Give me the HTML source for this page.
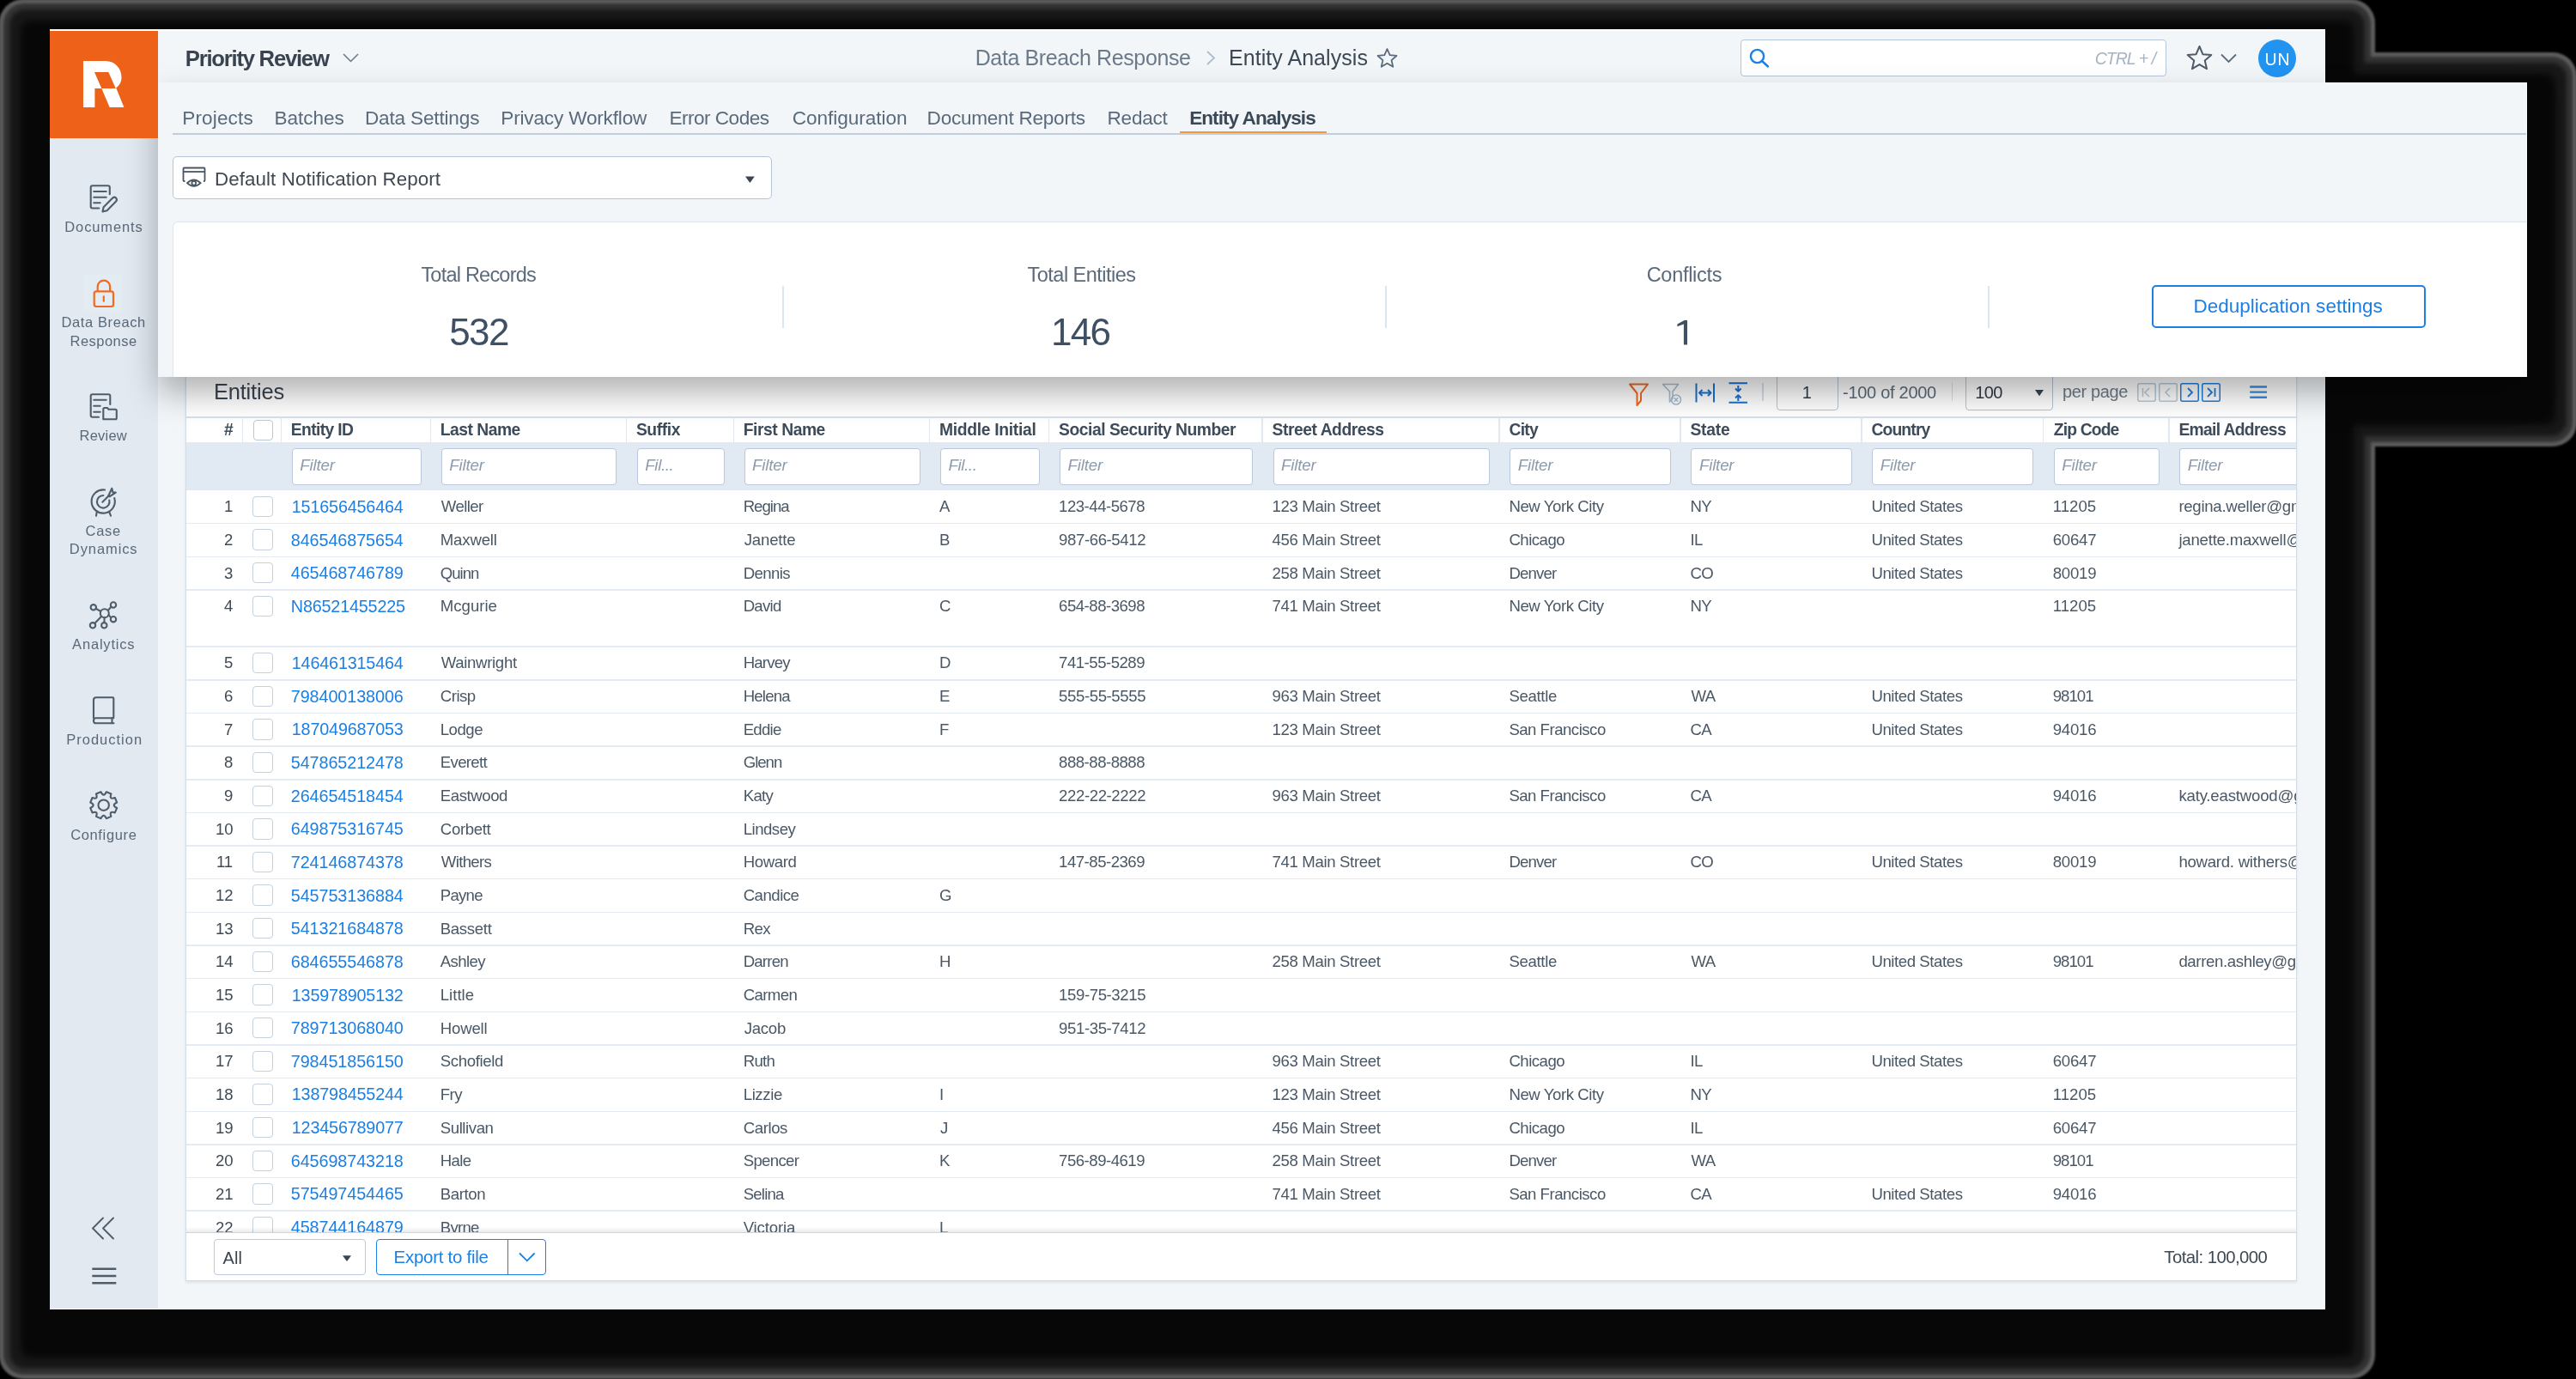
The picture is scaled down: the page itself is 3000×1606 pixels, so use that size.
<!DOCTYPE html>
<html><head><meta charset="utf-8"><style>
html,body{margin:0;padding:0;}
body{width:3000px;height:1606px;position:relative;overflow:hidden;background:#000;font-family:'Liberation Sans', sans-serif;}
</style></head><body>
<div style="position:absolute;left:0;top:0;width:3000px;height:1606px;filter:blur(0.55px);">
<div style="position:absolute;left:-1.00px;top:-1.00px;width:2767.00px;height:1607.00px;background:#5c5c5c;border-radius:28px;filter:blur(0.8px);"></div>
<div style="position:absolute;left:125.00px;top:61.00px;width:2876.00px;height:459.00px;background:#5c5c5c;border-radius:28px;filter:blur(0.8px);"></div>
<div style="position:absolute;left:4.00px;top:4.00px;width:2757.00px;height:1597.00px;background:#343434;border-radius:24px;filter:blur(1.5px);"></div>
<div style="position:absolute;left:130.00px;top:66.00px;width:2866.00px;height:449.00px;background:#343434;border-radius:24px;filter:blur(1.5px);"></div>
<div style="position:absolute;left:11.00px;top:11.00px;width:2743.00px;height:1583.00px;background:#181818;border-radius:18px;filter:blur(2.5px);"></div>
<div style="position:absolute;left:137.00px;top:73.00px;width:2852.00px;height:435.00px;background:#181818;border-radius:18px;filter:blur(2.5px);"></div>
<div style="position:absolute;left:24.00px;top:24.00px;width:2717.00px;height:1557.00px;background:#070707;border-radius:10px;filter:blur(4px);"></div>
<div style="position:absolute;left:150.00px;top:86.00px;width:2826.00px;height:409.00px;background:#070707;border-radius:10px;filter:blur(4px);"></div>
<div style="position:absolute;left:58.00px;top:34.00px;width:2650.00px;height:1491.00px;background:#f2f6f9;"></div>
<div style="position:absolute;left:58.00px;top:34.00px;width:126.00px;height:1491.00px;background:#e2e9f1;"></div>
<svg style="position:absolute;left:98.00px;top:208.00px;" width="46" height="46" viewBox="0 0 46 46"><g fill="none" stroke="#4f5d6b" stroke-width="2.1" stroke-linecap="round" stroke-linejoin="round"><path d="M17.3,34.5 H9.7 Q7.7,34.5 7.7,32.5 V10.3 Q7.7,8.3 9.7,8.3 H27.8 Q29.8,8.3 29.8,10.3 V18.3"/><path d="M11.3,15 H25.7 M11.3,21.7 H25.7 M11.3,28.3 H18.7"/><path d="M21.5,38.5 L22.6,33.2 L33.2,22.6 Q35.3,20.8 37.1,22.6 Q38.9,24.5 37.1,26.5 L26.6,37.2 Z"/></g></svg>
<div style="position:absolute;left:75.30px;top:264.38px;font-size:16.5px;line-height:0;white-space:nowrap;color:#59697a;letter-spacing:0.887px;">Documents</div>
<div style="position:absolute;left:98.00px;top:320.30px;width:43.20px;height:42.50px;background:#e3ecf3;"></div>
<svg style="position:absolute;left:98.00px;top:318.00px;" width="46" height="46" viewBox="0 0 46 46"><g fill="none" stroke="#f26a1f" stroke-width="2.2" stroke-linecap="round" stroke-linejoin="round"><path d="M15.7,20.5 V15.9 A7.2,7.2 0 0 1 30.1,15.9 V20.5"/><rect x="11.7" y="21.3" width="22.3" height="17.7" rx="2.5"/><path d="M22.8,27.3 V32.7"/></g></svg>
<div style="position:absolute;left:71.50px;top:375.38px;font-size:16.5px;line-height:0;white-space:nowrap;color:#59697a;letter-spacing:0.600px;">Data Breach</div>
<div style="position:absolute;left:81.60px;top:396.98px;font-size:16.5px;line-height:0;white-space:nowrap;color:#59697a;letter-spacing:0.457px;">Response</div>
<svg style="position:absolute;left:98.00px;top:451.00px;" width="46" height="46" viewBox="0 0 46 46"><g fill="none" stroke="#4f5d6b" stroke-width="2.1" stroke-linecap="round" stroke-linejoin="round"><path d="M17,34.8 H9.7 Q7.7,34.8 7.7,32.8 V10.2 Q7.7,8.2 9.7,8.2 H28.3 Q30.3,8.2 30.3,10.2 V20"/><path d="M11.3,14.8 H25.7 M11.3,21.8 H18.7 M11.3,28.7 H18.7"/><path d="M22.3,37.3 V25.5 Q22.3,24 23.8,24 H27 L28.5,25.8 H36.3 Q37.8,25.8 37.8,27.3 V35.8 Q37.8,37.3 36.3,37.3 H23.8 Q22.3,37.3 22.3,35.8 Z"/></g></svg>
<div style="position:absolute;left:92.50px;top:506.98px;font-size:16.5px;line-height:0;white-space:nowrap;color:#59697a;letter-spacing:0.220px;">Review</div>
<svg style="position:absolute;left:98.00px;top:562.00px;" width="46" height="46" viewBox="0 0 46 46"><g fill="none" stroke="#4f5d6b" stroke-width="2.1" stroke-linecap="round" stroke-linejoin="round"><path d="M24,8.5 A13.6,13.6 0 1 0 35.2,18"/><path d="M22.3,15 A7.3,7.3 0 1 0 29.3,20.5"/><path d="M21.3,22.7 L29,15"/><path d="M28,16 L32.3,6.8 L33.5,11.6 L36.8,11.5 L29.5,16.3 Z"/><path d="M14.7,34.3 L14,38.7 M29.3,34.3 L31,38.7"/></g></svg>
<div style="position:absolute;left:99.50px;top:617.68px;font-size:16.5px;line-height:0;white-space:nowrap;color:#59697a;letter-spacing:0.733px;">Case</div>
<div style="position:absolute;left:80.80px;top:638.88px;font-size:16.5px;line-height:0;white-space:nowrap;color:#59697a;letter-spacing:0.914px;">Dynamics</div>
<svg style="position:absolute;left:97.00px;top:693.00px;" width="46" height="46" viewBox="0 0 46 46"><g fill="none" stroke="#4f5d6b" stroke-width="2.1" stroke-linecap="round"><circle cx="24.8" cy="21.2" r="5"/><circle cx="11.8" cy="14.3" r="3.2"/><circle cx="35" cy="11.5" r="3.2"/><circle cx="35" cy="28.2" r="3.2"/><circle cx="11" cy="35.3" r="3.2"/><circle cx="24.3" cy="35.3" r="3.2"/><path d="M14.8,15.8 L20.3,19 M28.7,18 L32.4,13.8 M29.6,23.2 L32,26.2 M21.2,24.8 L13.3,33 M24.6,26.2 L24.4,32.1"/></g></svg>
<div style="position:absolute;left:84.10px;top:749.88px;font-size:16.5px;line-height:0;white-space:nowrap;color:#59697a;letter-spacing:0.812px;">Analytics</div>
<svg style="position:absolute;left:97.00px;top:804.00px;" width="46" height="46" viewBox="0 0 46 46"><g fill="none" stroke="#4f5d6b" stroke-width="2.1" stroke-linecap="round" stroke-linejoin="round"><path d="M12,32.2 V11.2 Q12,8.2 15,8.2 H34.3 Q35.3,8.2 35.3,9.2 V32.2 H14.5 Q12,32.2 12,35.2 Q12,38.3 14.5,38.3 H35.5"/><path d="M33.5,32.2 V38.3"/></g></svg>
<div style="position:absolute;left:77.30px;top:860.88px;font-size:16.5px;line-height:0;white-space:nowrap;color:#59697a;letter-spacing:0.989px;">Production</div>
<svg style="position:absolute;left:97.00px;top:915.00px;" width="46" height="46" viewBox="0 0 46 46"><g fill="none" stroke="#4f5d6b" stroke-width="2.1" stroke-linejoin="round"><path d="M26.85,7.22 L32.42,9.52 Q29.78,16.62 36.88,13.98 L39.18,19.55 Q32.30,22.70 39.18,25.85 L36.88,31.42 Q29.78,28.78 32.42,35.88 L26.85,38.18 Q23.70,31.30 20.55,38.18 L14.98,35.88 Q17.62,28.78 10.52,31.42 L8.22,25.85 Q15.10,22.70 8.22,19.55 L10.52,13.98 Q17.62,16.62 14.98,9.52 L20.55,7.22 Q23.70,14.10 26.85,7.22 Z"/><circle cx="23.7" cy="22.7" r="6.2"/></g></svg>
<div style="position:absolute;left:82.20px;top:971.78px;font-size:16.5px;line-height:0;white-space:nowrap;color:#59697a;letter-spacing:0.637px;">Configure</div>
<svg style="position:absolute;left:100.00px;top:1410.00px;" width="40" height="40" viewBox="0 0 40 40"><g fill="none" stroke="#4f5d6b" stroke-width="1.9" stroke-linecap="round" stroke-linejoin="round"><path d="M20,8.5 L8,20.5 L20,32.5 M32,8.5 L20,20.5 L32,32.5"/></g></svg>
<svg style="position:absolute;left:100.00px;top:1470.00px;" width="40" height="32" viewBox="0 0 40 32"><g fill="none" stroke="#4f5d6b" stroke-width="2.4"><path d="M7.3,7.8 H35.3 M7.3,16 H35.3 M7.3,24.3 H35.3"/></g></svg>
<div style="position:absolute;left:184.00px;top:34.00px;width:2524.00px;height:62.00px;background:#f2f6f9;"></div>
<div style="position:absolute;left:215.80px;top:67.69px;font-size:25.7px;line-height:0;white-space:nowrap;color:#3a4450;font-weight:700;letter-spacing:-1.250px;">Priority Review</div>
<svg style="position:absolute;left:395.00px;top:55.00px;" width="28" height="24" viewBox="0 0 28 24"><path d="M5,8 L13.5,16.5 L22,8" fill="none" stroke="#6a7885" stroke-width="1.5"/></svg>
<div style="position:absolute;left:1135.70px;top:66.74px;font-size:25px;line-height:0;white-space:nowrap;color:#6b7a8a;letter-spacing:-0.379px;">Data Breach Response</div>
<svg style="position:absolute;left:1400.00px;top:55.00px;" width="22" height="24" viewBox="0 0 22 24"><path d="M6,5 L14,12.5 L6,20" fill="none" stroke="#a9bdd3" stroke-width="1.8"/></svg>
<div style="position:absolute;left:1431.00px;top:66.74px;font-size:25px;line-height:0;white-space:nowrap;color:#3c4856;letter-spacing:0.050px;">Entity Analysis</div>
<svg style="position:absolute;left:1595.00px;top:48.00px;" width="40" height="40" viewBox="0 0 40 40"><path d="M20.50,9.00 L23.62,16.21 L31.44,16.95 L25.54,22.14 L27.26,29.80 L20.50,25.80 L13.74,29.80 L15.46,22.14 L9.56,16.95 L17.38,16.21 Z" fill="none" stroke="#5b6b7b" stroke-width="1.8" stroke-linejoin="round"/></svg>
<div style="position:absolute;left:2027.40px;top:46.20px;width:495.80px;height:42.50px;background:#fff;border:1.6px solid #b5c6d9;border-radius:4px;box-sizing:border-box;"></div>
<svg style="position:absolute;left:2030.00px;top:50.00px;" width="36" height="36" viewBox="0 0 36 36"><g fill="none" stroke="#1b7fe3" stroke-width="2.4" stroke-linecap="round"><circle cx="16.5" cy="15.5" r="7.6"/><path d="M22,21 L29,27.5"/></g></svg>
<div style="position:absolute;left:2439.70px;top:67.94px;font-size:19.5px;line-height:0;white-space:nowrap;color:#a5b3c2;font-style:italic;letter-spacing:-0.971px;">CTRL + /</div>
<svg style="position:absolute;left:2540.00px;top:46.00px;" width="44" height="44" viewBox="0 0 44 44"><path d="M21.50,8.00 L25.38,17.16 L35.29,18.02 L27.78,24.54 L30.02,34.23 L21.50,29.10 L12.98,34.23 L15.22,24.54 L7.71,18.02 L17.62,17.16 Z" fill="none" stroke="#4f5b67" stroke-width="2" stroke-linejoin="round"/></svg>
<svg style="position:absolute;left:2582.00px;top:58.00px;" width="26" height="20" viewBox="0 0 26 20"><path d="M5,5.5 L13.5,14 L22,5.5" fill="none" stroke="#5b6b7b" stroke-width="1.8"/></svg>
<div style="position:absolute;left:2630.00px;top:45.50px;width:44.00px;height:44.00px;background:#2193f0;border-radius:50%;"></div>
<div style="position:absolute;left:2637.50px;top:68.74px;font-size:19.5px;line-height:0;white-space:nowrap;color:#fff;letter-spacing:1.000px;">UN</div>
<div style="position:absolute;left:216.20px;top:300.00px;width:2458.80px;height:1191.60px;background:#fff;border:1px solid #d3dde8;box-sizing:border-box;box-shadow:0 2px 3px rgba(0,0,0,0.08);"></div>
<div style="position:absolute;left:248.90px;top:456.16px;font-size:25.5px;line-height:0;white-space:nowrap;color:#3a4654;letter-spacing:-0.186px;">Entities</div>
<svg style="position:absolute;left:1890.00px;top:440.00px;" width="36" height="34" viewBox="0 0 36 34"><path d="M8,7.5 H29 L21,18 V26.5 L16.5,32 V18 Z" fill="none" stroke="#ee6a24" stroke-width="2" stroke-linejoin="round"/></svg>
<svg style="position:absolute;left:1930.00px;top:440.00px;" width="36" height="34" viewBox="0 0 36 34"><g fill="none" stroke="#a9bdd1" stroke-width="1.6" stroke-linejoin="round"><path d="M6.5,7.5 H24.5 L18,16 V24 L14.5,28 V16 Z"/><circle cx="22" cy="25.5" r="5.5"/><path d="M19.8,23.3 L24.2,27.7 M24.2,23.3 L19.8,27.7"/></g></svg>
<svg style="position:absolute;left:1970.00px;top:440.00px;" width="36" height="34" viewBox="0 0 36 34"><g fill="none" stroke="#1a73d2" stroke-width="2"><path d="M5.5,6.5 V28.5 M26,6.5 V28.5 M9,17.5 H22.5"/><path d="M12.5,14 L9,17.5 L12.5,21 M19,14 L22.5,17.5 L19,21" stroke-linejoin="round"/></g></svg>
<svg style="position:absolute;left:2008.00px;top:440.00px;" width="36" height="34" viewBox="0 0 36 34"><g fill="none" stroke="#1a73d2" stroke-width="2"><path d="M5.5,6.3 H27 M5.5,28.8 H27 M16.3,9 V15.5 M16.3,20.5 V27"/><path d="M13,12.5 L16.3,15.8 L19.6,12.5 M13,23.5 L16.3,20.2 L19.6,23.5" stroke-linejoin="round"/></g></svg>
<div style="position:absolute;left:2052.00px;top:446.00px;width:1.50px;height:21.00px;background:#d6dfe8;"></div>
<div style="position:absolute;left:2068.70px;top:420.00px;width:72.60px;height:58.30px;border:1.5px solid #b3c4d6;border-radius:4px;box-sizing:border-box;background:rgba(255,255,255,0.0);"></div>
<div style="position:absolute;left:2098.70px;top:457.27px;font-size:20px;line-height:0;white-space:nowrap;color:#333c46;">1</div>
<div style="position:absolute;left:2146.00px;top:457.27px;font-size:20px;line-height:0;white-space:nowrap;color:#5d6c7b;letter-spacing:-0.282px;">-100 of 2000</div>
<div style="position:absolute;left:2272.60px;top:446.00px;width:1.40px;height:21.00px;background:#d6dfe8;"></div>
<div style="position:absolute;left:2289.40px;top:420.00px;width:101.60px;height:58.30px;border:1.5px solid #b3c4d6;border-radius:4px;box-sizing:border-box;"></div>
<div style="position:absolute;left:2300.30px;top:457.07px;font-size:20px;line-height:0;white-space:nowrap;color:#333c46;letter-spacing:-0.600px;">100</div>
<svg style="position:absolute;left:2366.00px;top:450.00px;" width="18" height="16" viewBox="0 0 18 16"><path d="M4,4 H14 L9,11.3 Z" fill="#3a4552"/></svg>
<div style="position:absolute;left:2402.00px;top:456.37px;font-size:20px;line-height:0;white-space:nowrap;color:#6d7b89;letter-spacing:-0.386px;">per page</div>
<svg style="position:absolute;left:2488.20px;top:445.00px;" width="24" height="24" viewBox="0 0 24 24"><rect x="1.75" y="1.75" width="20.5" height="20.5" rx="2" fill="none" stroke="#b9c9da" stroke-width="1.5"/><path d="M7.5,7 V17 M15,7 L10,12 L15,17" fill="none" stroke="#b9c9da" stroke-width="1.5"/></svg>
<svg style="position:absolute;left:2513.00px;top:445.00px;" width="24" height="24" viewBox="0 0 24 24"><rect x="1.75" y="1.75" width="20.5" height="20.5" rx="2" fill="none" stroke="#b9c9da" stroke-width="1.5"/><path d="M14,7 L9,12 L14,17" fill="none" stroke="#b9c9da" stroke-width="1.5"/></svg>
<svg style="position:absolute;left:2538.00px;top:445.00px;" width="24" height="24" viewBox="0 0 24 24"><rect x="1.75" y="1.75" width="20.5" height="20.5" rx="2" fill="none" stroke="#1b7fe3" stroke-width="1.5"/><path d="M10,7 L15,12 L10,17" fill="none" stroke="#1b7fe3" stroke-width="1.8"/></svg>
<svg style="position:absolute;left:2562.90px;top:445.00px;" width="24" height="24" viewBox="0 0 24 24"><rect x="1.75" y="1.75" width="20.5" height="20.5" rx="2" fill="none" stroke="#1b7fe3" stroke-width="1.5"/><path d="M8,7 L13,12 L8,17 M16.5,7 V17" fill="none" stroke="#1b7fe3" stroke-width="1.8"/></svg>
<svg style="position:absolute;left:2616.00px;top:446.00px;" width="28" height="22" viewBox="0 0 28 22"><path d="M4.2,4.5 H24 M4.2,10.6 H24 M4.2,16.7 H24" fill="none" stroke="#3a8ee6" stroke-width="2.4"/></svg>
<div style="position:absolute;left:217.20px;top:484.50px;width:2456.80px;height:2.00px;background:#d7e1eb;"></div>
<div style="position:absolute;left:281.55px;top:486.00px;width:1.50px;height:28.60px;background:#e1e8f0;"></div>
<div style="position:absolute;left:326.65px;top:486.00px;width:1.50px;height:28.60px;background:#e1e8f0;"></div>
<div style="position:absolute;left:500.65px;top:486.00px;width:1.50px;height:28.60px;background:#e1e8f0;"></div>
<div style="position:absolute;left:728.75px;top:486.00px;width:1.50px;height:28.60px;background:#e1e8f0;"></div>
<div style="position:absolute;left:853.55px;top:486.00px;width:1.50px;height:28.60px;background:#e1e8f0;"></div>
<div style="position:absolute;left:1081.85px;top:486.00px;width:1.50px;height:28.60px;background:#e1e8f0;"></div>
<div style="position:absolute;left:1220.95px;top:486.00px;width:1.50px;height:28.60px;background:#e1e8f0;"></div>
<div style="position:absolute;left:1469.45px;top:486.00px;width:1.50px;height:28.60px;background:#e1e8f0;"></div>
<div style="position:absolute;left:1745.25px;top:486.00px;width:1.50px;height:28.60px;background:#e1e8f0;"></div>
<div style="position:absolute;left:1956.35px;top:486.00px;width:1.50px;height:28.60px;background:#e1e8f0;"></div>
<div style="position:absolute;left:2167.25px;top:486.00px;width:1.50px;height:28.60px;background:#e1e8f0;"></div>
<div style="position:absolute;left:2378.65px;top:486.00px;width:1.50px;height:28.60px;background:#e1e8f0;"></div>
<div style="position:absolute;left:2525.25px;top:486.00px;width:1.50px;height:28.60px;background:#e1e8f0;"></div>
<div style="position:absolute;left:217.20px;top:514.60px;width:2456.80px;height:56.40px;background:#e1e9f2;"></div>
<div style="position:absolute;left:261.00px;top:501.01px;font-size:19.3px;line-height:0;white-space:nowrap;color:#3d4b5a;font-weight:700;">#</div>
<div style="position:absolute;left:294.50px;top:488.80px;width:23.90px;height:24.10px;border:1.5px solid #b9c8d8;border-radius:4px;box-sizing:border-box;background:#fff;"></div>
<div style="position:absolute;left:338.80px;top:501.01px;font-size:19.3px;line-height:0;white-space:nowrap;color:#3d4b5a;font-weight:700;letter-spacing:-0.625px;">Entity ID</div>
<div style="position:absolute;left:339.70px;top:522.00px;width:151.20px;height:43.00px;background:#fff;border:1.5px solid #b9c9db;border-radius:4px;box-sizing:border-box;"></div>
<div style="position:absolute;left:349.20px;top:542.49px;font-size:18.8px;line-height:0;white-space:nowrap;color:#8d9bab;font-style:italic;letter-spacing:-0.200px;">Filter</div>
<div style="position:absolute;left:512.80px;top:501.01px;font-size:19.3px;line-height:0;white-space:nowrap;color:#3d4b5a;font-weight:700;letter-spacing:-0.500px;">Last Name</div>
<div style="position:absolute;left:513.70px;top:522.00px;width:204.70px;height:43.00px;background:#fff;border:1.5px solid #b9c9db;border-radius:4px;box-sizing:border-box;"></div>
<div style="position:absolute;left:523.20px;top:542.49px;font-size:18.8px;line-height:0;white-space:nowrap;color:#8d9bab;font-style:italic;letter-spacing:-0.200px;">Filter</div>
<div style="position:absolute;left:740.90px;top:501.01px;font-size:19.3px;line-height:0;white-space:nowrap;color:#3d4b5a;font-weight:700;letter-spacing:-0.400px;">Suffix</div>
<div style="position:absolute;left:741.80px;top:522.00px;width:102.00px;height:43.00px;background:#fff;border:1.5px solid #b9c9db;border-radius:4px;box-sizing:border-box;"></div>
<div style="position:absolute;left:751.30px;top:542.49px;font-size:18.8px;line-height:0;white-space:nowrap;color:#8d9bab;font-style:italic;letter-spacing:-0.400px;">Fil...</div>
<div style="position:absolute;left:865.70px;top:501.01px;font-size:19.3px;line-height:0;white-space:nowrap;color:#3d4b5a;font-weight:700;letter-spacing:-0.444px;">First Name</div>
<div style="position:absolute;left:866.60px;top:522.00px;width:205.10px;height:43.00px;background:#fff;border:1.5px solid #b9c9db;border-radius:4px;box-sizing:border-box;"></div>
<div style="position:absolute;left:876.10px;top:542.49px;font-size:18.8px;line-height:0;white-space:nowrap;color:#8d9bab;font-style:italic;letter-spacing:-0.200px;">Filter</div>
<div style="position:absolute;left:1094.00px;top:501.01px;font-size:19.3px;line-height:0;white-space:nowrap;color:#3d4b5a;font-weight:700;letter-spacing:-0.308px;">Middle Initial</div>
<div style="position:absolute;left:1094.90px;top:522.00px;width:116.00px;height:43.00px;background:#fff;border:1.5px solid #b9c9db;border-radius:4px;box-sizing:border-box;"></div>
<div style="position:absolute;left:1104.40px;top:542.49px;font-size:18.8px;line-height:0;white-space:nowrap;color:#8d9bab;font-style:italic;letter-spacing:-0.400px;">Fil...</div>
<div style="position:absolute;left:1233.10px;top:501.01px;font-size:19.3px;line-height:0;white-space:nowrap;color:#3d4b5a;font-weight:700;letter-spacing:-0.476px;">Social Security Number</div>
<div style="position:absolute;left:1234.00px;top:522.00px;width:225.30px;height:43.00px;background:#fff;border:1.5px solid #b9c9db;border-radius:4px;box-sizing:border-box;"></div>
<div style="position:absolute;left:1243.50px;top:542.49px;font-size:18.8px;line-height:0;white-space:nowrap;color:#8d9bab;font-style:italic;letter-spacing:-0.200px;">Filter</div>
<div style="position:absolute;left:1481.60px;top:501.01px;font-size:19.3px;line-height:0;white-space:nowrap;color:#3d4b5a;font-weight:700;letter-spacing:-0.462px;">Street Address</div>
<div style="position:absolute;left:1482.50px;top:522.00px;width:252.60px;height:43.00px;background:#fff;border:1.5px solid #b9c9db;border-radius:4px;box-sizing:border-box;"></div>
<div style="position:absolute;left:1492.00px;top:542.49px;font-size:18.8px;line-height:0;white-space:nowrap;color:#8d9bab;font-style:italic;letter-spacing:-0.200px;">Filter</div>
<div style="position:absolute;left:1757.40px;top:501.01px;font-size:19.3px;line-height:0;white-space:nowrap;color:#3d4b5a;font-weight:700;letter-spacing:-0.667px;">City</div>
<div style="position:absolute;left:1758.30px;top:522.00px;width:188.00px;height:43.00px;background:#fff;border:1.5px solid #b9c9db;border-radius:4px;box-sizing:border-box;"></div>
<div style="position:absolute;left:1767.80px;top:542.49px;font-size:18.8px;line-height:0;white-space:nowrap;color:#8d9bab;font-style:italic;letter-spacing:-0.200px;">Filter</div>
<div style="position:absolute;left:1968.50px;top:501.01px;font-size:19.3px;line-height:0;white-space:nowrap;color:#3d4b5a;font-weight:700;letter-spacing:-0.250px;">State</div>
<div style="position:absolute;left:1969.40px;top:522.00px;width:188.10px;height:43.00px;background:#fff;border:1.5px solid #b9c9db;border-radius:4px;box-sizing:border-box;"></div>
<div style="position:absolute;left:1978.90px;top:542.49px;font-size:18.8px;line-height:0;white-space:nowrap;color:#8d9bab;font-style:italic;letter-spacing:-0.200px;">Filter</div>
<div style="position:absolute;left:2179.40px;top:501.01px;font-size:19.3px;line-height:0;white-space:nowrap;color:#3d4b5a;font-weight:700;letter-spacing:-0.833px;">Country</div>
<div style="position:absolute;left:2180.30px;top:522.00px;width:188.20px;height:43.00px;background:#fff;border:1.5px solid #b9c9db;border-radius:4px;box-sizing:border-box;"></div>
<div style="position:absolute;left:2189.80px;top:542.49px;font-size:18.8px;line-height:0;white-space:nowrap;color:#8d9bab;font-style:italic;letter-spacing:-0.200px;">Filter</div>
<div style="position:absolute;left:2391.80px;top:501.01px;font-size:19.3px;line-height:0;white-space:nowrap;color:#3d4b5a;font-weight:700;letter-spacing:-0.857px;">Zip Code</div>
<div style="position:absolute;left:2391.70px;top:522.00px;width:123.70px;height:43.00px;background:#fff;border:1.5px solid #b9c9db;border-radius:4px;box-sizing:border-box;"></div>
<div style="position:absolute;left:2401.20px;top:542.49px;font-size:18.8px;line-height:0;white-space:nowrap;color:#8d9bab;font-style:italic;letter-spacing:-0.200px;">Filter</div>
<div style="position:absolute;left:2537.40px;top:501.01px;font-size:19.3px;line-height:0;white-space:nowrap;color:#3d4b5a;font-weight:700;letter-spacing:-0.667px;">Email Address</div>
<div style="position:absolute;left:2538.30px;top:522.00px;width:135.70px;height:43.00px;background:#fff;border:1.5px solid #b9c9db;border-radius:4px;box-sizing:border-box;border-right:none;border-radius:4px 0 0 4px;"></div>
<div style="position:absolute;left:2547.80px;top:542.49px;font-size:18.8px;line-height:0;white-space:nowrap;color:#8d9bab;font-style:italic;letter-spacing:-0.200px;">Filter</div>
<div style="position:absolute;left:217.20px;top:571.00px;width:2456.80px;height:864.50px;overflow:hidden;">
<div style="position:absolute;left:0.00px;top:37.95px;width:2456.80px;height:1.50px;background:#e5ebf2;"></div>
<div style="position:absolute;left:43.70px;top:19.36px;font-size:18.6px;line-height:0;white-space:nowrap;color:#3f4a55;">1</div>
<div style="position:absolute;left:77.00px;top:6.80px;width:24.10px;height:24.40px;border:1.5px solid #c3d0de;border-radius:4px;box-sizing:border-box;background:#fff;"></div>
<div style="position:absolute;left:122.60px;top:18.94px;font-size:19.8px;line-height:0;white-space:nowrap;color:#1b7fe3;letter-spacing:-0.182px;">151656456464</div>
<div style="position:absolute;left:296.60px;top:19.36px;font-size:18.6px;line-height:0;white-space:nowrap;color:#4a5866;letter-spacing:-0.600px;">Weller</div>
<div style="position:absolute;left:648.50px;top:19.36px;font-size:18.6px;line-height:0;white-space:nowrap;color:#4a5866;letter-spacing:-1.000px;">Regina</div>
<div style="position:absolute;left:876.80px;top:19.36px;font-size:18.6px;line-height:0;white-space:nowrap;color:#4a5866;">A</div>
<div style="position:absolute;left:1015.90px;top:19.36px;font-size:18.6px;line-height:0;white-space:nowrap;color:#4a5866;letter-spacing:-0.500px;">123-44-5678</div>
<div style="position:absolute;left:1264.40px;top:19.36px;font-size:18.6px;line-height:0;white-space:nowrap;color:#4a5866;letter-spacing:-0.357px;">123 Main Street</div>
<div style="position:absolute;left:1540.20px;top:19.36px;font-size:18.6px;line-height:0;white-space:nowrap;color:#4a5866;letter-spacing:-0.417px;">New York City</div>
<div style="position:absolute;left:1751.30px;top:19.36px;font-size:18.6px;line-height:0;white-space:nowrap;color:#4a5866;letter-spacing:-0.558px;">NY</div>
<div style="position:absolute;left:1962.20px;top:19.36px;font-size:18.6px;line-height:0;white-space:nowrap;color:#4a5866;letter-spacing:-0.417px;">United States</div>
<div style="position:absolute;left:2173.60px;top:19.36px;font-size:18.6px;line-height:0;white-space:nowrap;color:#4a5866;">11205</div>
<div style="position:absolute;left:2320.20px;top:19.36px;font-size:18.6px;line-height:0;white-space:nowrap;color:#4a5866;letter-spacing:-0.273px;">regina.weller@gmail.com</div>
<div style="position:absolute;left:0.00px;top:76.60px;width:2456.80px;height:1.50px;background:#e5ebf2;"></div>
<div style="position:absolute;left:43.70px;top:58.01px;font-size:18.6px;line-height:0;white-space:nowrap;color:#3f4a55;">2</div>
<div style="position:absolute;left:77.00px;top:45.45px;width:24.10px;height:24.40px;border:1.5px solid #c3d0de;border-radius:4px;box-sizing:border-box;background:#fff;"></div>
<div style="position:absolute;left:121.60px;top:57.59px;font-size:19.8px;line-height:0;white-space:nowrap;color:#1b7fe3;letter-spacing:-0.091px;">846546875654</div>
<div style="position:absolute;left:295.60px;top:58.01px;font-size:18.6px;line-height:0;white-space:nowrap;color:#4a5866;letter-spacing:-0.167px;">Maxwell</div>
<div style="position:absolute;left:649.50px;top:58.01px;font-size:18.6px;line-height:0;white-space:nowrap;color:#4a5866;letter-spacing:-0.167px;">Janette</div>
<div style="position:absolute;left:876.80px;top:58.01px;font-size:18.6px;line-height:0;white-space:nowrap;color:#4a5866;">B</div>
<div style="position:absolute;left:1015.90px;top:58.01px;font-size:18.6px;line-height:0;white-space:nowrap;color:#4a5866;letter-spacing:-0.400px;">987-66-5412</div>
<div style="position:absolute;left:1264.40px;top:58.01px;font-size:18.6px;line-height:0;white-space:nowrap;color:#4a5866;letter-spacing:-0.357px;">456 Main Street</div>
<div style="position:absolute;left:1540.20px;top:58.01px;font-size:18.6px;line-height:0;white-space:nowrap;color:#4a5866;letter-spacing:-0.500px;">Chicago</div>
<div style="position:absolute;left:1751.30px;top:58.01px;font-size:18.6px;line-height:0;white-space:nowrap;color:#4a5866;letter-spacing:-0.558px;">IL</div>
<div style="position:absolute;left:1962.20px;top:58.01px;font-size:18.6px;line-height:0;white-space:nowrap;color:#4a5866;letter-spacing:-0.417px;">United States</div>
<div style="position:absolute;left:2173.60px;top:58.01px;font-size:18.6px;line-height:0;white-space:nowrap;color:#4a5866;letter-spacing:-0.250px;">60647</div>
<div style="position:absolute;left:2320.20px;top:58.01px;font-size:18.6px;line-height:0;white-space:nowrap;color:#4a5866;letter-spacing:-0.208px;">janette.maxwell@gmail.com</div>
<div style="position:absolute;left:0.00px;top:115.25px;width:2456.80px;height:1.50px;background:#e5ebf2;"></div>
<div style="position:absolute;left:43.70px;top:96.66px;font-size:18.6px;line-height:0;white-space:nowrap;color:#3f4a55;">3</div>
<div style="position:absolute;left:77.00px;top:84.10px;width:24.10px;height:24.40px;border:1.5px solid #c3d0de;border-radius:4px;box-sizing:border-box;background:#fff;"></div>
<div style="position:absolute;left:121.60px;top:96.24px;font-size:19.8px;line-height:0;white-space:nowrap;color:#1b7fe3;letter-spacing:-0.091px;">465468746789</div>
<div style="position:absolute;left:295.60px;top:96.66px;font-size:18.6px;line-height:0;white-space:nowrap;color:#4a5866;letter-spacing:-1.000px;">Quinn</div>
<div style="position:absolute;left:648.50px;top:96.66px;font-size:18.6px;line-height:0;white-space:nowrap;color:#4a5866;letter-spacing:-0.600px;">Dennis</div>
<div style="position:absolute;left:1264.40px;top:96.66px;font-size:18.6px;line-height:0;white-space:nowrap;color:#4a5866;letter-spacing:-0.357px;">258 Main Street</div>
<div style="position:absolute;left:1540.20px;top:96.66px;font-size:18.6px;line-height:0;white-space:nowrap;color:#4a5866;letter-spacing:-0.800px;">Denver</div>
<div style="position:absolute;left:1751.30px;top:96.66px;font-size:18.6px;line-height:0;white-space:nowrap;color:#4a5866;letter-spacing:-0.558px;">CO</div>
<div style="position:absolute;left:1962.20px;top:96.66px;font-size:18.6px;line-height:0;white-space:nowrap;color:#4a5866;letter-spacing:-0.417px;">United States</div>
<div style="position:absolute;left:2173.60px;top:96.66px;font-size:18.6px;line-height:0;white-space:nowrap;color:#4a5866;letter-spacing:-0.250px;">80019</div>
<div style="position:absolute;left:0.00px;top:181.40px;width:2456.80px;height:1.50px;background:#e5ebf2;"></div>
<div style="position:absolute;left:43.70px;top:135.31px;font-size:18.6px;line-height:0;white-space:nowrap;color:#3f4a55;">4</div>
<div style="position:absolute;left:77.00px;top:122.75px;width:24.10px;height:24.40px;border:1.5px solid #c3d0de;border-radius:4px;box-sizing:border-box;background:#fff;"></div>
<div style="position:absolute;left:121.60px;top:134.89px;font-size:19.8px;line-height:0;white-space:nowrap;color:#1b7fe3;letter-spacing:-0.182px;">N86521455225</div>
<div style="position:absolute;left:295.60px;top:135.31px;font-size:18.6px;line-height:0;white-space:nowrap;color:#4a5866;">Mcgurie</div>
<div style="position:absolute;left:648.50px;top:135.31px;font-size:18.6px;line-height:0;white-space:nowrap;color:#4a5866;letter-spacing:-0.750px;">David</div>
<div style="position:absolute;left:876.80px;top:135.31px;font-size:18.6px;line-height:0;white-space:nowrap;color:#4a5866;">C</div>
<div style="position:absolute;left:1015.90px;top:135.31px;font-size:18.6px;line-height:0;white-space:nowrap;color:#4a5866;letter-spacing:-0.500px;">654-88-3698</div>
<div style="position:absolute;left:1264.40px;top:135.31px;font-size:18.6px;line-height:0;white-space:nowrap;color:#4a5866;letter-spacing:-0.357px;">741 Main Street</div>
<div style="position:absolute;left:1540.20px;top:135.31px;font-size:18.6px;line-height:0;white-space:nowrap;color:#4a5866;letter-spacing:-0.417px;">New York City</div>
<div style="position:absolute;left:1751.30px;top:135.31px;font-size:18.6px;line-height:0;white-space:nowrap;color:#4a5866;letter-spacing:-0.558px;">NY</div>
<div style="position:absolute;left:2173.60px;top:135.31px;font-size:18.6px;line-height:0;white-space:nowrap;color:#4a5866;">11205</div>
<div style="position:absolute;left:0.00px;top:220.05px;width:2456.80px;height:1.50px;background:#e5ebf2;"></div>
<div style="position:absolute;left:43.70px;top:201.46px;font-size:18.6px;line-height:0;white-space:nowrap;color:#3f4a55;">5</div>
<div style="position:absolute;left:77.00px;top:188.90px;width:24.10px;height:24.40px;border:1.5px solid #c3d0de;border-radius:4px;box-sizing:border-box;background:#fff;"></div>
<div style="position:absolute;left:122.60px;top:201.04px;font-size:19.8px;line-height:0;white-space:nowrap;color:#1b7fe3;letter-spacing:-0.182px;">146461315464</div>
<div style="position:absolute;left:296.60px;top:201.46px;font-size:18.6px;line-height:0;white-space:nowrap;color:#4a5866;letter-spacing:-0.333px;">Wainwright</div>
<div style="position:absolute;left:648.50px;top:201.46px;font-size:18.6px;line-height:0;white-space:nowrap;color:#4a5866;letter-spacing:-0.800px;">Harvey</div>
<div style="position:absolute;left:876.80px;top:201.46px;font-size:18.6px;line-height:0;white-space:nowrap;color:#4a5866;">D</div>
<div style="position:absolute;left:1015.90px;top:201.46px;font-size:18.6px;line-height:0;white-space:nowrap;color:#4a5866;letter-spacing:-0.500px;">741-55-5289</div>
<div style="position:absolute;left:0.00px;top:258.70px;width:2456.80px;height:1.50px;background:#e5ebf2;"></div>
<div style="position:absolute;left:43.70px;top:240.11px;font-size:18.6px;line-height:0;white-space:nowrap;color:#3f4a55;">6</div>
<div style="position:absolute;left:77.00px;top:227.55px;width:24.10px;height:24.40px;border:1.5px solid #c3d0de;border-radius:4px;box-sizing:border-box;background:#fff;"></div>
<div style="position:absolute;left:121.60px;top:239.69px;font-size:19.8px;line-height:0;white-space:nowrap;color:#1b7fe3;letter-spacing:-0.091px;">798400138006</div>
<div style="position:absolute;left:295.60px;top:240.11px;font-size:18.6px;line-height:0;white-space:nowrap;color:#4a5866;letter-spacing:-0.500px;">Crisp</div>
<div style="position:absolute;left:648.50px;top:240.11px;font-size:18.6px;line-height:0;white-space:nowrap;color:#4a5866;letter-spacing:-0.800px;">Helena</div>
<div style="position:absolute;left:876.80px;top:240.11px;font-size:18.6px;line-height:0;white-space:nowrap;color:#4a5866;">E</div>
<div style="position:absolute;left:1015.90px;top:240.11px;font-size:18.6px;line-height:0;white-space:nowrap;color:#4a5866;letter-spacing:-0.400px;">555-55-5555</div>
<div style="position:absolute;left:1264.40px;top:240.11px;font-size:18.6px;line-height:0;white-space:nowrap;color:#4a5866;letter-spacing:-0.357px;">963 Main Street</div>
<div style="position:absolute;left:1540.20px;top:240.11px;font-size:18.6px;line-height:0;white-space:nowrap;color:#4a5866;letter-spacing:-0.333px;">Seattle</div>
<div style="position:absolute;left:1752.30px;top:240.11px;font-size:18.6px;line-height:0;white-space:nowrap;color:#4a5866;letter-spacing:-0.558px;">WA</div>
<div style="position:absolute;left:1962.20px;top:240.11px;font-size:18.6px;line-height:0;white-space:nowrap;color:#4a5866;letter-spacing:-0.417px;">United States</div>
<div style="position:absolute;left:2173.60px;top:240.11px;font-size:18.6px;line-height:0;white-space:nowrap;color:#4a5866;letter-spacing:-1.000px;">98101</div>
<div style="position:absolute;left:0.00px;top:297.35px;width:2456.80px;height:1.50px;background:#e5ebf2;"></div>
<div style="position:absolute;left:43.70px;top:278.76px;font-size:18.6px;line-height:0;white-space:nowrap;color:#3f4a55;">7</div>
<div style="position:absolute;left:77.00px;top:266.20px;width:24.10px;height:24.40px;border:1.5px solid #c3d0de;border-radius:4px;box-sizing:border-box;background:#fff;"></div>
<div style="position:absolute;left:122.60px;top:278.34px;font-size:19.8px;line-height:0;white-space:nowrap;color:#1b7fe3;letter-spacing:-0.182px;">187049687053</div>
<div style="position:absolute;left:295.60px;top:278.76px;font-size:18.6px;line-height:0;white-space:nowrap;color:#4a5866;letter-spacing:-0.500px;">Lodge</div>
<div style="position:absolute;left:648.50px;top:278.76px;font-size:18.6px;line-height:0;white-space:nowrap;color:#4a5866;letter-spacing:-0.750px;">Eddie</div>
<div style="position:absolute;left:876.80px;top:278.76px;font-size:18.6px;line-height:0;white-space:nowrap;color:#4a5866;">F</div>
<div style="position:absolute;left:1264.40px;top:278.76px;font-size:18.6px;line-height:0;white-space:nowrap;color:#4a5866;letter-spacing:-0.357px;">123 Main Street</div>
<div style="position:absolute;left:1540.20px;top:278.76px;font-size:18.6px;line-height:0;white-space:nowrap;color:#4a5866;letter-spacing:-0.500px;">San Francisco</div>
<div style="position:absolute;left:1751.30px;top:278.76px;font-size:18.6px;line-height:0;white-space:nowrap;color:#4a5866;letter-spacing:-0.558px;">CA</div>
<div style="position:absolute;left:1962.20px;top:278.76px;font-size:18.6px;line-height:0;white-space:nowrap;color:#4a5866;letter-spacing:-0.417px;">United States</div>
<div style="position:absolute;left:2173.60px;top:278.76px;font-size:18.6px;line-height:0;white-space:nowrap;color:#4a5866;letter-spacing:-0.250px;">94016</div>
<div style="position:absolute;left:0.00px;top:336.00px;width:2456.80px;height:1.50px;background:#e5ebf2;"></div>
<div style="position:absolute;left:43.70px;top:317.41px;font-size:18.6px;line-height:0;white-space:nowrap;color:#3f4a55;">8</div>
<div style="position:absolute;left:77.00px;top:304.85px;width:24.10px;height:24.40px;border:1.5px solid #c3d0de;border-radius:4px;box-sizing:border-box;background:#fff;"></div>
<div style="position:absolute;left:121.60px;top:316.99px;font-size:19.8px;line-height:0;white-space:nowrap;color:#1b7fe3;letter-spacing:-0.091px;">547865212478</div>
<div style="position:absolute;left:295.60px;top:317.41px;font-size:18.6px;line-height:0;white-space:nowrap;color:#4a5866;letter-spacing:-0.667px;">Everett</div>
<div style="position:absolute;left:648.50px;top:317.41px;font-size:18.6px;line-height:0;white-space:nowrap;color:#4a5866;letter-spacing:-1.000px;">Glenn</div>
<div style="position:absolute;left:1015.90px;top:317.41px;font-size:18.6px;line-height:0;white-space:nowrap;color:#4a5866;letter-spacing:-0.500px;">888-88-8888</div>
<div style="position:absolute;left:0.00px;top:374.65px;width:2456.80px;height:1.50px;background:#e5ebf2;"></div>
<div style="position:absolute;left:43.70px;top:356.06px;font-size:18.6px;line-height:0;white-space:nowrap;color:#3f4a55;">9</div>
<div style="position:absolute;left:77.00px;top:343.50px;width:24.10px;height:24.40px;border:1.5px solid #c3d0de;border-radius:4px;box-sizing:border-box;background:#fff;"></div>
<div style="position:absolute;left:121.60px;top:355.64px;font-size:19.8px;line-height:0;white-space:nowrap;color:#1b7fe3;letter-spacing:-0.091px;">264654518454</div>
<div style="position:absolute;left:295.60px;top:356.06px;font-size:18.6px;line-height:0;white-space:nowrap;color:#4a5866;letter-spacing:-0.429px;">Eastwood</div>
<div style="position:absolute;left:648.50px;top:356.06px;font-size:18.6px;line-height:0;white-space:nowrap;color:#4a5866;letter-spacing:-0.667px;">Katy</div>
<div style="position:absolute;left:1015.90px;top:356.06px;font-size:18.6px;line-height:0;white-space:nowrap;color:#4a5866;letter-spacing:-0.400px;">222-22-2222</div>
<div style="position:absolute;left:1264.40px;top:356.06px;font-size:18.6px;line-height:0;white-space:nowrap;color:#4a5866;letter-spacing:-0.357px;">963 Main Street</div>
<div style="position:absolute;left:1540.20px;top:356.06px;font-size:18.6px;line-height:0;white-space:nowrap;color:#4a5866;letter-spacing:-0.500px;">San Francisco</div>
<div style="position:absolute;left:1751.30px;top:356.06px;font-size:18.6px;line-height:0;white-space:nowrap;color:#4a5866;letter-spacing:-0.558px;">CA</div>
<div style="position:absolute;left:2173.60px;top:356.06px;font-size:18.6px;line-height:0;white-space:nowrap;color:#4a5866;letter-spacing:-0.250px;">94016</div>
<div style="position:absolute;left:2320.20px;top:356.06px;font-size:18.6px;line-height:0;white-space:nowrap;color:#4a5866;letter-spacing:-0.182px;">katy.eastwood@gmail.com</div>
<div style="position:absolute;left:0.00px;top:413.30px;width:2456.80px;height:1.50px;background:#e5ebf2;"></div>
<div style="position:absolute;left:33.70px;top:394.71px;font-size:18.6px;line-height:0;white-space:nowrap;color:#3f4a55;">10</div>
<div style="position:absolute;left:77.00px;top:382.15px;width:24.10px;height:24.40px;border:1.5px solid #c3d0de;border-radius:4px;box-sizing:border-box;background:#fff;"></div>
<div style="position:absolute;left:121.60px;top:394.29px;font-size:19.8px;line-height:0;white-space:nowrap;color:#1b7fe3;letter-spacing:-0.091px;">649875316745</div>
<div style="position:absolute;left:295.60px;top:394.71px;font-size:18.6px;line-height:0;white-space:nowrap;color:#4a5866;letter-spacing:-0.333px;">Corbett</div>
<div style="position:absolute;left:648.50px;top:394.71px;font-size:18.6px;line-height:0;white-space:nowrap;color:#4a5866;letter-spacing:-0.500px;">Lindsey</div>
<div style="position:absolute;left:0.00px;top:451.95px;width:2456.80px;height:1.50px;background:#e5ebf2;"></div>
<div style="position:absolute;left:34.70px;top:433.36px;font-size:18.6px;line-height:0;white-space:nowrap;color:#3f4a55;">11</div>
<div style="position:absolute;left:77.00px;top:420.80px;width:24.10px;height:24.40px;border:1.5px solid #c3d0de;border-radius:4px;box-sizing:border-box;background:#fff;"></div>
<div style="position:absolute;left:121.60px;top:432.94px;font-size:19.8px;line-height:0;white-space:nowrap;color:#1b7fe3;letter-spacing:-0.091px;">724146874378</div>
<div style="position:absolute;left:296.60px;top:433.36px;font-size:18.6px;line-height:0;white-space:nowrap;color:#4a5866;letter-spacing:-0.667px;">Withers</div>
<div style="position:absolute;left:648.50px;top:433.36px;font-size:18.6px;line-height:0;white-space:nowrap;color:#4a5866;letter-spacing:-0.400px;">Howard</div>
<div style="position:absolute;left:1015.90px;top:433.36px;font-size:18.6px;line-height:0;white-space:nowrap;color:#4a5866;letter-spacing:-0.500px;">147-85-2369</div>
<div style="position:absolute;left:1264.40px;top:433.36px;font-size:18.6px;line-height:0;white-space:nowrap;color:#4a5866;letter-spacing:-0.357px;">741 Main Street</div>
<div style="position:absolute;left:1540.20px;top:433.36px;font-size:18.6px;line-height:0;white-space:nowrap;color:#4a5866;letter-spacing:-0.800px;">Denver</div>
<div style="position:absolute;left:1751.30px;top:433.36px;font-size:18.6px;line-height:0;white-space:nowrap;color:#4a5866;letter-spacing:-0.558px;">CO</div>
<div style="position:absolute;left:1962.20px;top:433.36px;font-size:18.6px;line-height:0;white-space:nowrap;color:#4a5866;letter-spacing:-0.417px;">United States</div>
<div style="position:absolute;left:2173.60px;top:433.36px;font-size:18.6px;line-height:0;white-space:nowrap;color:#4a5866;letter-spacing:-0.250px;">80019</div>
<div style="position:absolute;left:2320.20px;top:433.36px;font-size:18.6px;line-height:0;white-space:nowrap;color:#4a5866;letter-spacing:-0.250px;">howard. withers@gmail.com</div>
<div style="position:absolute;left:0.00px;top:490.60px;width:2456.80px;height:1.50px;background:#e5ebf2;"></div>
<div style="position:absolute;left:33.70px;top:472.01px;font-size:18.6px;line-height:0;white-space:nowrap;color:#3f4a55;">12</div>
<div style="position:absolute;left:77.00px;top:459.45px;width:24.10px;height:24.40px;border:1.5px solid #c3d0de;border-radius:4px;box-sizing:border-box;background:#fff;"></div>
<div style="position:absolute;left:121.60px;top:471.59px;font-size:19.8px;line-height:0;white-space:nowrap;color:#1b7fe3;letter-spacing:-0.091px;">545753136884</div>
<div style="position:absolute;left:295.60px;top:472.01px;font-size:18.6px;line-height:0;white-space:nowrap;color:#4a5866;letter-spacing:-0.750px;">Payne</div>
<div style="position:absolute;left:648.50px;top:472.01px;font-size:18.6px;line-height:0;white-space:nowrap;color:#4a5866;letter-spacing:-0.500px;">Candice</div>
<div style="position:absolute;left:876.80px;top:472.01px;font-size:18.6px;line-height:0;white-space:nowrap;color:#4a5866;">G</div>
<div style="position:absolute;left:0.00px;top:529.25px;width:2456.80px;height:1.50px;background:#e5ebf2;"></div>
<div style="position:absolute;left:33.70px;top:510.66px;font-size:18.6px;line-height:0;white-space:nowrap;color:#3f4a55;">13</div>
<div style="position:absolute;left:77.00px;top:498.10px;width:24.10px;height:24.40px;border:1.5px solid #c3d0de;border-radius:4px;box-sizing:border-box;background:#fff;"></div>
<div style="position:absolute;left:121.60px;top:510.24px;font-size:19.8px;line-height:0;white-space:nowrap;color:#1b7fe3;letter-spacing:-0.091px;">541321684878</div>
<div style="position:absolute;left:295.60px;top:510.66px;font-size:18.6px;line-height:0;white-space:nowrap;color:#4a5866;letter-spacing:-0.333px;">Bassett</div>
<div style="position:absolute;left:648.50px;top:510.66px;font-size:18.6px;line-height:0;white-space:nowrap;color:#4a5866;letter-spacing:-0.558px;">Rex</div>
<div style="position:absolute;left:0.00px;top:567.90px;width:2456.80px;height:1.50px;background:#e5ebf2;"></div>
<div style="position:absolute;left:33.70px;top:549.31px;font-size:18.6px;line-height:0;white-space:nowrap;color:#3f4a55;">14</div>
<div style="position:absolute;left:77.00px;top:536.75px;width:24.10px;height:24.40px;border:1.5px solid #c3d0de;border-radius:4px;box-sizing:border-box;background:#fff;"></div>
<div style="position:absolute;left:121.60px;top:548.89px;font-size:19.8px;line-height:0;white-space:nowrap;color:#1b7fe3;letter-spacing:-0.091px;">684655546878</div>
<div style="position:absolute;left:295.60px;top:549.31px;font-size:18.6px;line-height:0;white-space:nowrap;color:#4a5866;letter-spacing:-0.600px;">Ashley</div>
<div style="position:absolute;left:648.50px;top:549.31px;font-size:18.6px;line-height:0;white-space:nowrap;color:#4a5866;letter-spacing:-0.800px;">Darren</div>
<div style="position:absolute;left:876.80px;top:549.31px;font-size:18.6px;line-height:0;white-space:nowrap;color:#4a5866;">H</div>
<div style="position:absolute;left:1264.40px;top:549.31px;font-size:18.6px;line-height:0;white-space:nowrap;color:#4a5866;letter-spacing:-0.357px;">258 Main Street</div>
<div style="position:absolute;left:1540.20px;top:549.31px;font-size:18.6px;line-height:0;white-space:nowrap;color:#4a5866;letter-spacing:-0.333px;">Seattle</div>
<div style="position:absolute;left:1752.30px;top:549.31px;font-size:18.6px;line-height:0;white-space:nowrap;color:#4a5866;letter-spacing:-0.558px;">WA</div>
<div style="position:absolute;left:1962.20px;top:549.31px;font-size:18.6px;line-height:0;white-space:nowrap;color:#4a5866;letter-spacing:-0.417px;">United States</div>
<div style="position:absolute;left:2173.60px;top:549.31px;font-size:18.6px;line-height:0;white-space:nowrap;color:#4a5866;letter-spacing:-1.000px;">98101</div>
<div style="position:absolute;left:2320.20px;top:549.31px;font-size:18.6px;line-height:0;white-space:nowrap;color:#4a5866;letter-spacing:-0.364px;">darren.ashley@gmail.com</div>
<div style="position:absolute;left:0.00px;top:606.55px;width:2456.80px;height:1.50px;background:#e5ebf2;"></div>
<div style="position:absolute;left:33.70px;top:587.96px;font-size:18.6px;line-height:0;white-space:nowrap;color:#3f4a55;">15</div>
<div style="position:absolute;left:77.00px;top:575.40px;width:24.10px;height:24.40px;border:1.5px solid #c3d0de;border-radius:4px;box-sizing:border-box;background:#fff;"></div>
<div style="position:absolute;left:122.60px;top:587.54px;font-size:19.8px;line-height:0;white-space:nowrap;color:#1b7fe3;letter-spacing:-0.182px;">135978905132</div>
<div style="position:absolute;left:295.60px;top:587.96px;font-size:18.6px;line-height:0;white-space:nowrap;color:#4a5866;">Little</div>
<div style="position:absolute;left:648.50px;top:587.96px;font-size:18.6px;line-height:0;white-space:nowrap;color:#4a5866;letter-spacing:-0.600px;">Carmen</div>
<div style="position:absolute;left:1015.90px;top:587.96px;font-size:18.6px;line-height:0;white-space:nowrap;color:#4a5866;letter-spacing:-0.400px;">159-75-3215</div>
<div style="position:absolute;left:0.00px;top:645.20px;width:2456.80px;height:1.50px;background:#e5ebf2;"></div>
<div style="position:absolute;left:33.70px;top:626.61px;font-size:18.6px;line-height:0;white-space:nowrap;color:#3f4a55;">16</div>
<div style="position:absolute;left:77.00px;top:614.05px;width:24.10px;height:24.40px;border:1.5px solid #c3d0de;border-radius:4px;box-sizing:border-box;background:#fff;"></div>
<div style="position:absolute;left:121.60px;top:626.19px;font-size:19.8px;line-height:0;white-space:nowrap;color:#1b7fe3;letter-spacing:-0.091px;">789713068040</div>
<div style="position:absolute;left:295.60px;top:626.61px;font-size:18.6px;line-height:0;white-space:nowrap;color:#4a5866;letter-spacing:-0.200px;">Howell</div>
<div style="position:absolute;left:649.50px;top:626.61px;font-size:18.6px;line-height:0;white-space:nowrap;color:#4a5866;letter-spacing:-0.250px;">Jacob</div>
<div style="position:absolute;left:1015.90px;top:626.61px;font-size:18.6px;line-height:0;white-space:nowrap;color:#4a5866;letter-spacing:-0.400px;">951-35-7412</div>
<div style="position:absolute;left:0.00px;top:683.85px;width:2456.80px;height:1.50px;background:#e5ebf2;"></div>
<div style="position:absolute;left:33.70px;top:665.26px;font-size:18.6px;line-height:0;white-space:nowrap;color:#3f4a55;">17</div>
<div style="position:absolute;left:77.00px;top:652.70px;width:24.10px;height:24.40px;border:1.5px solid #c3d0de;border-radius:4px;box-sizing:border-box;background:#fff;"></div>
<div style="position:absolute;left:121.60px;top:664.84px;font-size:19.8px;line-height:0;white-space:nowrap;color:#1b7fe3;letter-spacing:-0.091px;">798451856150</div>
<div style="position:absolute;left:295.60px;top:665.26px;font-size:18.6px;line-height:0;white-space:nowrap;color:#4a5866;letter-spacing:-0.375px;">Schofield</div>
<div style="position:absolute;left:648.50px;top:665.26px;font-size:18.6px;line-height:0;white-space:nowrap;color:#4a5866;letter-spacing:-0.667px;">Ruth</div>
<div style="position:absolute;left:1264.40px;top:665.26px;font-size:18.6px;line-height:0;white-space:nowrap;color:#4a5866;letter-spacing:-0.357px;">963 Main Street</div>
<div style="position:absolute;left:1540.20px;top:665.26px;font-size:18.6px;line-height:0;white-space:nowrap;color:#4a5866;letter-spacing:-0.500px;">Chicago</div>
<div style="position:absolute;left:1751.30px;top:665.26px;font-size:18.6px;line-height:0;white-space:nowrap;color:#4a5866;letter-spacing:-0.558px;">IL</div>
<div style="position:absolute;left:1962.20px;top:665.26px;font-size:18.6px;line-height:0;white-space:nowrap;color:#4a5866;letter-spacing:-0.417px;">United States</div>
<div style="position:absolute;left:2173.60px;top:665.26px;font-size:18.6px;line-height:0;white-space:nowrap;color:#4a5866;letter-spacing:-0.250px;">60647</div>
<div style="position:absolute;left:0.00px;top:722.50px;width:2456.80px;height:1.50px;background:#e5ebf2;"></div>
<div style="position:absolute;left:33.70px;top:703.91px;font-size:18.6px;line-height:0;white-space:nowrap;color:#3f4a55;">18</div>
<div style="position:absolute;left:77.00px;top:691.35px;width:24.10px;height:24.40px;border:1.5px solid #c3d0de;border-radius:4px;box-sizing:border-box;background:#fff;"></div>
<div style="position:absolute;left:122.60px;top:703.49px;font-size:19.8px;line-height:0;white-space:nowrap;color:#1b7fe3;letter-spacing:-0.182px;">138798455244</div>
<div style="position:absolute;left:295.60px;top:703.91px;font-size:18.6px;line-height:0;white-space:nowrap;color:#4a5866;letter-spacing:-0.558px;">Fry</div>
<div style="position:absolute;left:648.50px;top:703.91px;font-size:18.6px;line-height:0;white-space:nowrap;color:#4a5866;letter-spacing:-0.400px;">Lizzie</div>
<div style="position:absolute;left:876.80px;top:703.91px;font-size:18.6px;line-height:0;white-space:nowrap;color:#4a5866;">I</div>
<div style="position:absolute;left:1264.40px;top:703.91px;font-size:18.6px;line-height:0;white-space:nowrap;color:#4a5866;letter-spacing:-0.357px;">123 Main Street</div>
<div style="position:absolute;left:1540.20px;top:703.91px;font-size:18.6px;line-height:0;white-space:nowrap;color:#4a5866;letter-spacing:-0.417px;">New York City</div>
<div style="position:absolute;left:1751.30px;top:703.91px;font-size:18.6px;line-height:0;white-space:nowrap;color:#4a5866;letter-spacing:-0.558px;">NY</div>
<div style="position:absolute;left:2173.60px;top:703.91px;font-size:18.6px;line-height:0;white-space:nowrap;color:#4a5866;">11205</div>
<div style="position:absolute;left:0.00px;top:761.15px;width:2456.80px;height:1.50px;background:#e5ebf2;"></div>
<div style="position:absolute;left:33.70px;top:742.56px;font-size:18.6px;line-height:0;white-space:nowrap;color:#3f4a55;">19</div>
<div style="position:absolute;left:77.00px;top:730.00px;width:24.10px;height:24.40px;border:1.5px solid #c3d0de;border-radius:4px;box-sizing:border-box;background:#fff;"></div>
<div style="position:absolute;left:122.60px;top:742.14px;font-size:19.8px;line-height:0;white-space:nowrap;color:#1b7fe3;letter-spacing:-0.182px;">123456789077</div>
<div style="position:absolute;left:295.60px;top:742.56px;font-size:18.6px;line-height:0;white-space:nowrap;color:#4a5866;letter-spacing:-0.429px;">Sullivan</div>
<div style="position:absolute;left:648.50px;top:742.56px;font-size:18.6px;line-height:0;white-space:nowrap;color:#4a5866;letter-spacing:-0.400px;">Carlos</div>
<div style="position:absolute;left:877.80px;top:742.56px;font-size:18.6px;line-height:0;white-space:nowrap;color:#4a5866;">J</div>
<div style="position:absolute;left:1264.40px;top:742.56px;font-size:18.6px;line-height:0;white-space:nowrap;color:#4a5866;letter-spacing:-0.357px;">456 Main Street</div>
<div style="position:absolute;left:1540.20px;top:742.56px;font-size:18.6px;line-height:0;white-space:nowrap;color:#4a5866;letter-spacing:-0.500px;">Chicago</div>
<div style="position:absolute;left:1751.30px;top:742.56px;font-size:18.6px;line-height:0;white-space:nowrap;color:#4a5866;letter-spacing:-0.558px;">IL</div>
<div style="position:absolute;left:2173.60px;top:742.56px;font-size:18.6px;line-height:0;white-space:nowrap;color:#4a5866;letter-spacing:-0.250px;">60647</div>
<div style="position:absolute;left:0.00px;top:799.80px;width:2456.80px;height:1.50px;background:#e5ebf2;"></div>
<div style="position:absolute;left:33.70px;top:781.21px;font-size:18.6px;line-height:0;white-space:nowrap;color:#3f4a55;">20</div>
<div style="position:absolute;left:77.00px;top:768.65px;width:24.10px;height:24.40px;border:1.5px solid #c3d0de;border-radius:4px;box-sizing:border-box;background:#fff;"></div>
<div style="position:absolute;left:121.60px;top:780.79px;font-size:19.8px;line-height:0;white-space:nowrap;color:#1b7fe3;letter-spacing:-0.091px;">645698743218</div>
<div style="position:absolute;left:295.60px;top:781.21px;font-size:18.6px;line-height:0;white-space:nowrap;color:#4a5866;letter-spacing:-0.667px;">Hale</div>
<div style="position:absolute;left:648.50px;top:781.21px;font-size:18.6px;line-height:0;white-space:nowrap;color:#4a5866;letter-spacing:-0.667px;">Spencer</div>
<div style="position:absolute;left:876.80px;top:781.21px;font-size:18.6px;line-height:0;white-space:nowrap;color:#4a5866;">K</div>
<div style="position:absolute;left:1015.90px;top:781.21px;font-size:18.6px;line-height:0;white-space:nowrap;color:#4a5866;letter-spacing:-0.500px;">756-89-4619</div>
<div style="position:absolute;left:1264.40px;top:781.21px;font-size:18.6px;line-height:0;white-space:nowrap;color:#4a5866;letter-spacing:-0.357px;">258 Main Street</div>
<div style="position:absolute;left:1540.20px;top:781.21px;font-size:18.6px;line-height:0;white-space:nowrap;color:#4a5866;letter-spacing:-0.800px;">Denver</div>
<div style="position:absolute;left:1752.30px;top:781.21px;font-size:18.6px;line-height:0;white-space:nowrap;color:#4a5866;letter-spacing:-0.558px;">WA</div>
<div style="position:absolute;left:2173.60px;top:781.21px;font-size:18.6px;line-height:0;white-space:nowrap;color:#4a5866;letter-spacing:-1.000px;">98101</div>
<div style="position:absolute;left:0.00px;top:838.45px;width:2456.80px;height:1.50px;background:#e5ebf2;"></div>
<div style="position:absolute;left:33.70px;top:819.86px;font-size:18.6px;line-height:0;white-space:nowrap;color:#3f4a55;">21</div>
<div style="position:absolute;left:77.00px;top:807.30px;width:24.10px;height:24.40px;border:1.5px solid #c3d0de;border-radius:4px;box-sizing:border-box;background:#fff;"></div>
<div style="position:absolute;left:121.60px;top:819.44px;font-size:19.8px;line-height:0;white-space:nowrap;color:#1b7fe3;letter-spacing:-0.091px;">575497454465</div>
<div style="position:absolute;left:295.60px;top:819.86px;font-size:18.6px;line-height:0;white-space:nowrap;color:#4a5866;letter-spacing:-0.400px;">Barton</div>
<div style="position:absolute;left:648.50px;top:819.86px;font-size:18.6px;line-height:0;white-space:nowrap;color:#4a5866;letter-spacing:-0.800px;">Selina</div>
<div style="position:absolute;left:1264.40px;top:819.86px;font-size:18.6px;line-height:0;white-space:nowrap;color:#4a5866;letter-spacing:-0.357px;">741 Main Street</div>
<div style="position:absolute;left:1540.20px;top:819.86px;font-size:18.6px;line-height:0;white-space:nowrap;color:#4a5866;letter-spacing:-0.500px;">San Francisco</div>
<div style="position:absolute;left:1751.30px;top:819.86px;font-size:18.6px;line-height:0;white-space:nowrap;color:#4a5866;letter-spacing:-0.558px;">CA</div>
<div style="position:absolute;left:1962.20px;top:819.86px;font-size:18.6px;line-height:0;white-space:nowrap;color:#4a5866;letter-spacing:-0.417px;">United States</div>
<div style="position:absolute;left:2173.60px;top:819.86px;font-size:18.6px;line-height:0;white-space:nowrap;color:#4a5866;letter-spacing:-0.250px;">94016</div>
<div style="position:absolute;left:33.70px;top:858.51px;font-size:18.6px;line-height:0;white-space:nowrap;color:#3f4a55;">22</div>
<div style="position:absolute;left:77.00px;top:845.95px;width:24.10px;height:24.40px;border:1.5px solid #c3d0de;border-radius:4px;box-sizing:border-box;background:#fff;"></div>
<div style="position:absolute;left:121.60px;top:858.09px;font-size:19.8px;line-height:0;white-space:nowrap;color:#1b7fe3;letter-spacing:-0.091px;">458744164879</div>
<div style="position:absolute;left:295.60px;top:858.51px;font-size:18.6px;line-height:0;white-space:nowrap;color:#4a5866;letter-spacing:-0.750px;">Byrne</div>
<div style="position:absolute;left:648.50px;top:858.51px;font-size:18.6px;line-height:0;white-space:nowrap;color:#4a5866;letter-spacing:-0.143px;">Victoria</div>
<div style="position:absolute;left:876.80px;top:858.51px;font-size:18.6px;line-height:0;white-space:nowrap;color:#4a5866;">L</div>
</div>
<div style="position:absolute;left:217.20px;top:1429.00px;width:2456.80px;height:6.00px;background:linear-gradient(to bottom, rgba(60,70,80,0), rgba(60,70,80,0.10));"></div>
<div style="position:absolute;left:217.20px;top:1434.80px;width:2456.80px;height:1.40px;background:#cbd5e0;"></div>
<div style="position:absolute;left:248.90px;top:1442.50px;width:176.90px;height:42.90px;background:#fff;border:1.5px solid #b9c9db;border-radius:4px;box-sizing:border-box;"></div>
<div style="position:absolute;left:259.50px;top:1465.47px;font-size:20px;line-height:0;white-space:nowrap;color:#3a4450;letter-spacing:0.100px;">All</div>
<svg style="position:absolute;left:394.00px;top:1457.00px;" width="20" height="16" viewBox="0 0 20 16"><path d="M5,5.3 H15 L10,12 Z" fill="#3a4552"/></svg>
<div style="position:absolute;left:437.50px;top:1442.50px;width:198.40px;height:42.90px;background:#fff;border:1.6px solid #1b7fe3;border-radius:4px;box-sizing:border-box;"></div>
<div style="position:absolute;left:590.90px;top:1442.50px;width:1.50px;height:42.90px;background:#1b7fe3;"></div>
<div style="position:absolute;left:458.60px;top:1463.90px;font-size:20.5px;line-height:0;white-space:nowrap;color:#1b7fe3;letter-spacing:-0.277px;">Export to file</div>
<svg style="position:absolute;left:600.00px;top:1452.00px;" width="28" height="22" viewBox="0 0 28 22"><path d="M5,7.5 L13.8,16.3 L22.6,7.5" fill="none" stroke="#1b7fe3" stroke-width="1.8"/></svg>
<div style="position:absolute;left:2520.30px;top:1463.67px;font-size:20.3px;line-height:0;white-space:nowrap;color:#3d4752;letter-spacing:-0.531px;">Total: 100,000</div>
<div style="position:absolute;left:184.00px;top:96.00px;width:2759.00px;height:343.00px;background:#f2f6f9;box-shadow:0 19px 35px rgba(0,0,0,0.30);"></div>
<div style="position:absolute;left:212.20px;top:138.17px;font-size:22.6px;line-height:0;white-space:nowrap;color:#5a6a7b;letter-spacing:0.129px;">Projects</div>
<div style="position:absolute;left:319.40px;top:138.17px;font-size:22.6px;line-height:0;white-space:nowrap;color:#5a6a7b;letter-spacing:-0.050px;">Batches</div>
<div style="position:absolute;left:424.90px;top:138.17px;font-size:22.6px;line-height:0;white-space:nowrap;color:#5a6a7b;letter-spacing:-0.175px;">Data Settings</div>
<div style="position:absolute;left:583.30px;top:138.17px;font-size:22.6px;line-height:0;white-space:nowrap;color:#5a6a7b;letter-spacing:-0.187px;">Privacy Workflow</div>
<div style="position:absolute;left:779.40px;top:138.17px;font-size:22.6px;line-height:0;white-space:nowrap;color:#5a6a7b;letter-spacing:-0.510px;">Error Codes</div>
<div style="position:absolute;left:922.70px;top:138.17px;font-size:22.6px;line-height:0;white-space:nowrap;color:#5a6a7b;letter-spacing:-0.050px;">Configuration</div>
<div style="position:absolute;left:1079.60px;top:138.17px;font-size:22.6px;line-height:0;white-space:nowrap;color:#5a6a7b;letter-spacing:-0.267px;">Document Reports</div>
<div style="position:absolute;left:1289.60px;top:138.17px;font-size:22.6px;line-height:0;white-space:nowrap;color:#5a6a7b;letter-spacing:-0.300px;">Redact</div>
<div style="position:absolute;left:1385.20px;top:138.17px;font-size:22.6px;line-height:0;white-space:nowrap;color:#3b4856;font-weight:700;letter-spacing:-0.971px;">Entity Analysis</div>
<div style="position:absolute;left:201.00px;top:155.00px;width:2742.00px;height:2.00px;background:#bfcfe0;"></div>
<div style="position:absolute;left:1373.50px;top:152.50px;width:171.80px;height:2.80px;background:#f0993f;"></div>
<div style="position:absolute;left:201.40px;top:182.20px;width:697.60px;height:49.50px;background:#fff;border:1.6px solid #b3c5d9;border-radius:5px;box-sizing:border-box;"></div>
<svg style="position:absolute;left:208.00px;top:190.00px;" width="36" height="34" viewBox="0 0 36 34"><g fill="none" stroke="#4a5663" stroke-width="1.8"><path d="M7.5,21 H6.5 Q5.5,21 5.5,20 V6.5 Q5.5,5.5 6.5,5.5 H29.5 Q30.5,5.5 30.5,6.5 V20 Q30.5,21 29.5,21 H29"/><path d="M5.5,10 H30.5"/><path d="M10,23.2 Q17.8,15.8 25.6,23.2 Q17.8,30.6 10,23.2 Z"/><circle cx="17.8" cy="23.2" r="2.4"/></g></svg>
<div style="position:absolute;left:250.00px;top:209.04px;font-size:22.4px;line-height:0;white-space:nowrap;color:#3f4853;letter-spacing:0.062px;">Default Notification Report</div>
<svg style="position:absolute;left:864.00px;top:200.00px;" width="18" height="18" viewBox="0 0 18 18"><path d="M4,5.4 H14.8 L9.4,12.9 Z" fill="#3a4552"/></svg>
<div style="position:absolute;left:200.70px;top:258.20px;width:2742.30px;height:180.80px;background:#fff;border:1.5px solid #dde6ef;border-right:none;border-bottom:none;border-radius:6px 0 0 0;box-sizing:border-box;"></div>
<div style="position:absolute;left:490.40px;top:320.06px;font-size:23.5px;line-height:0;white-space:nowrap;color:#5a6a7a;letter-spacing:-0.775px;">Total Records</div>
<div style="position:absolute;left:523.30px;top:387.05px;font-size:44px;line-height:0;white-space:nowrap;color:#3f5064;letter-spacing:-1.650px;">532</div>
<div style="position:absolute;left:1196.60px;top:320.06px;font-size:23.5px;line-height:0;white-space:nowrap;color:#5a6a7a;letter-spacing:-0.523px;">Total Entities</div>
<div style="position:absolute;left:1223.90px;top:387.05px;font-size:44px;line-height:0;white-space:nowrap;color:#3f5064;letter-spacing:-1.650px;">146</div>
<div style="position:absolute;left:1917.70px;top:320.06px;font-size:23.5px;line-height:0;white-space:nowrap;color:#5a6a7a;letter-spacing:-0.287px;">Conflicts</div>
<svg style="position:absolute;left:1945.00px;top:365.00px;" width="30" height="45" viewBox="0 0 30 45"><path fill="#3f5064" d="M16.6,8 H20 V36.5 H15.9 V12.5 L8.4,15.3 V12.5 Z"/></svg>
<div style="position:absolute;left:911.10px;top:333.00px;width:1.80px;height:49.00px;background:#dbe6f1;"></div>
<div style="position:absolute;left:1613.10px;top:333.00px;width:1.80px;height:49.00px;background:#dbe6f1;"></div>
<div style="position:absolute;left:2315.40px;top:333.00px;width:1.80px;height:49.00px;background:#dbe6f1;"></div>
<div style="position:absolute;left:2506.30px;top:331.50px;width:318.40px;height:50.00px;background:#fff;border:2px solid #1b7fe3;border-radius:5px;box-sizing:border-box;"></div>
<div style="position:absolute;left:2554.40px;top:356.50px;font-size:22.5px;line-height:0;white-space:nowrap;color:#1b7fe3;letter-spacing:0.010px;">Deduplication settings</div>
<div style="position:absolute;left:58.00px;top:34.00px;width:126.00px;height:127.00px;background:#ee6118;"></div>
<svg style="position:absolute;left:58.00px;top:34.00px;" width="126" height="127" viewBox="0 0 126 127"><path fill="#fff" fill-rule="evenodd" d="M38.97,36.9 H65 C76,36.9 83.5,45.5 83.5,56.2 C83.5,61.5 81,65.5 77.2,68.3 L86.4,91.1 H69.7 L60.3,68.9 H52.4 V91.1 H38.97 Z M52,50.1 H68.3 L76.8,68.9 H60.3 Z"/></svg>
<div style="position:absolute;left:58.00px;top:34.00px;width:2650.00px;height:1.50px;background:#fbfdfe;"></div>
<div style="position:absolute;left:58.00px;top:1523.50px;width:2650.00px;height:1.50px;background:#fbfdfe;"></div>
<div style="position:absolute;left:2706.50px;top:34.00px;width:1.50px;height:62.00px;background:#fbfdfe;"></div>
<div style="position:absolute;left:2941.50px;top:96.00px;width:1.50px;height:343.00px;background:#fbfdfe;"></div>
<div style="position:absolute;left:2708.00px;top:96.00px;width:235.00px;height:1.50px;background:#fbfdfe;"></div>
</div>
</body></html>
